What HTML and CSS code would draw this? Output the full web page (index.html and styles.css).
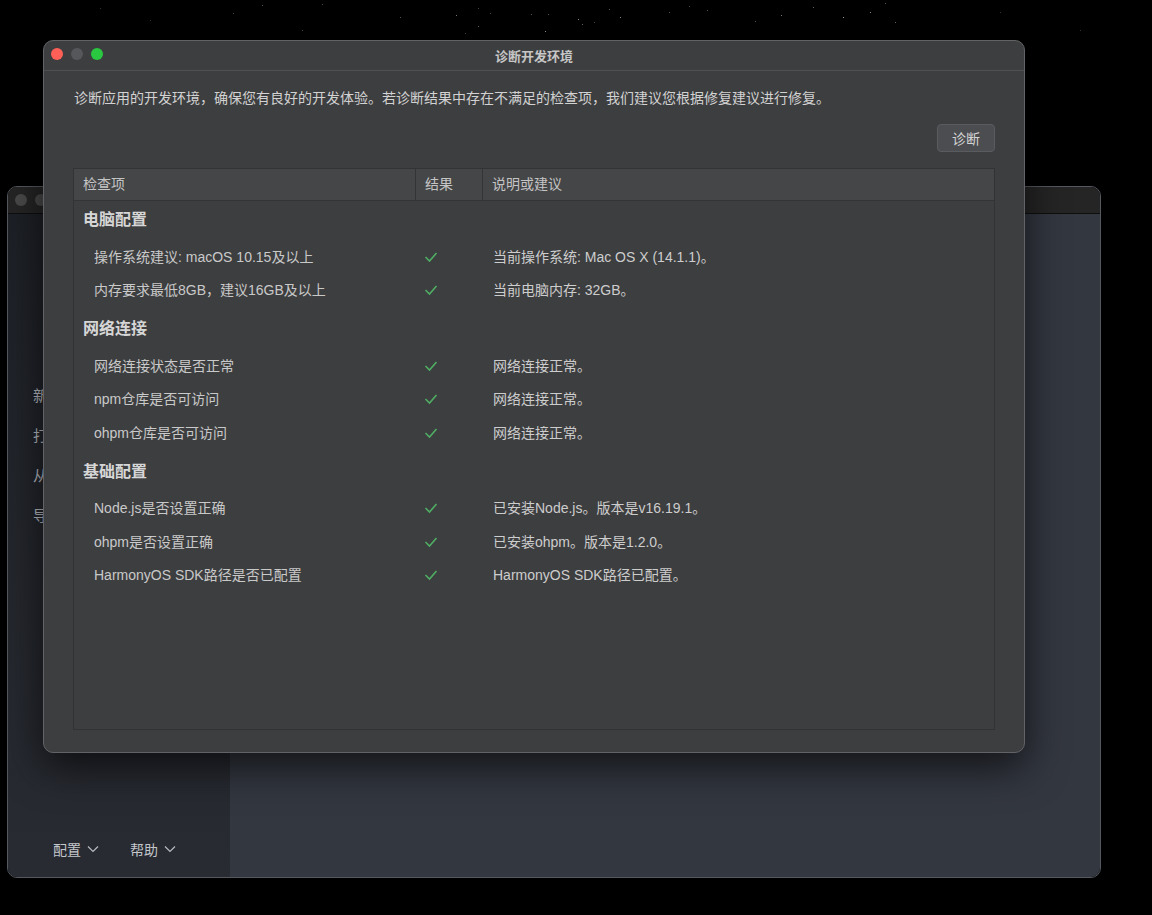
FILE: index.html
```html
<!DOCTYPE html>
<html lang="zh-CN">
<head>
    <meta charset="UTF-8">
    <title>诊断开发环境</title>
    <link rel="stylesheet" href="styles.css">
</head>
<body>
    <div class="desktop">
        <div class="stars"></div>

        <!-- Back window: welcome screen -->
        <div class="welcome-window">
            <div class="welcome-titlebar">
                <span class="dot"></span>
                <span class="dot"></span>
                <span class="dot"></span>
            </div>
            <div class="welcome-body">
                <div class="welcome-side">
                    <div class="side-menu">
                        <div class="side-item">新建</div>
                        <div class="side-item">打开</div>
                        <div class="side-item">从</div>
                        <div class="side-item">导入</div>
                    </div>
                    <div class="side-footer">
                        <span class="footer-link">配置
                            <svg width="12" height="8" viewBox="0 0 12 8"><polyline points="1,1.5 6,6.5 11,1.5" fill="none" stroke="#b8bbc0" stroke-width="1.2"/></svg>
                        </span>
                        <span class="footer-link">帮助
                            <svg width="12" height="8" viewBox="0 0 12 8"><polyline points="1,1.5 6,6.5 11,1.5" fill="none" stroke="#b8bbc0" stroke-width="1.2"/></svg>
                        </span>
                    </div>
                </div>
                <div class="welcome-main"></div>
            </div>
        </div>

        <!-- Front window: diagnose dialog -->
        <div class="dialog">
            <div class="dialog-titlebar">
                <div class="lights">
                    <span class="light red"></span>
                    <span class="light grey"></span>
                    <span class="light green"></span>
                </div>
                <div class="dialog-title">诊断开发环境</div>
            </div>
            <div class="dialog-content">
                <div class="intro">诊断应用的开发环境，确保您有良好的开发体验。若诊断结果中存在不满足的检查项，我们建议您根据修复建议进行修复。</div>
                <div class="actions">
                    <button class="btn">诊断</button>
                </div>
                <div class="check-table">
                    <div class="table-head">
                        <div class="th">检查项</div>
                        <div class="th">结果</div>
                        <div class="th last">说明或建议</div>
                    </div>
                    <div class="table-body">
                        <div class="group">电脑配置</div>
                        <div class="row">
                            <div class="cell-name">操作系统建议: macOS 10.15及以上</div>
                            <div class="cell-ok"><svg width="14" height="12" viewBox="0 0 14 12"><polyline points="1.5,6 5.5,10 12.5,2" fill="none" stroke="#4fae63" stroke-width="1.6"/></svg></div>
                            <div class="cell-desc">当前操作系统: Mac OS X (14.1.1)。</div>
                        </div>
                        <div class="row">
                            <div class="cell-name">内存要求最低8GB，建议16GB及以上</div>
                            <div class="cell-ok"><svg width="14" height="12" viewBox="0 0 14 12"><polyline points="1.5,6 5.5,10 12.5,2" fill="none" stroke="#4fae63" stroke-width="1.6"/></svg></div>
                            <div class="cell-desc">当前电脑内存: 32GB。</div>
                        </div>

                        <div class="group next">网络连接</div>
                        <div class="row">
                            <div class="cell-name">网络连接状态是否正常</div>
                            <div class="cell-ok"><svg width="14" height="12" viewBox="0 0 14 12"><polyline points="1.5,6 5.5,10 12.5,2" fill="none" stroke="#4fae63" stroke-width="1.6"/></svg></div>
                            <div class="cell-desc">网络连接正常。</div>
                        </div>
                        <div class="row">
                            <div class="cell-name">npm仓库是否可访问</div>
                            <div class="cell-ok"><svg width="14" height="12" viewBox="0 0 14 12"><polyline points="1.5,6 5.5,10 12.5,2" fill="none" stroke="#4fae63" stroke-width="1.6"/></svg></div>
                            <div class="cell-desc">网络连接正常。</div>
                        </div>
                        <div class="row">
                            <div class="cell-name">ohpm仓库是否可访问</div>
                            <div class="cell-ok"><svg width="14" height="12" viewBox="0 0 14 12"><polyline points="1.5,6 5.5,10 12.5,2" fill="none" stroke="#4fae63" stroke-width="1.6"/></svg></div>
                            <div class="cell-desc">网络连接正常。</div>
                        </div>

                        <div class="group next">基础配置</div>
                        <div class="row">
                            <div class="cell-name">Node.js是否设置正确</div>
                            <div class="cell-ok"><svg width="14" height="12" viewBox="0 0 14 12"><polyline points="1.5,6 5.5,10 12.5,2" fill="none" stroke="#4fae63" stroke-width="1.6"/></svg></div>
                            <div class="cell-desc">已安装Node.js。版本是v16.19.1。</div>
                        </div>
                        <div class="row">
                            <div class="cell-name">ohpm是否设置正确</div>
                            <div class="cell-ok"><svg width="14" height="12" viewBox="0 0 14 12"><polyline points="1.5,6 5.5,10 12.5,2" fill="none" stroke="#4fae63" stroke-width="1.6"/></svg></div>
                            <div class="cell-desc">已安装ohpm。版本是1.2.0。</div>
                        </div>
                        <div class="row">
                            <div class="cell-name">HarmonyOS SDK路径是否已配置</div>
                            <div class="cell-ok"><svg width="14" height="12" viewBox="0 0 14 12"><polyline points="1.5,6 5.5,10 12.5,2" fill="none" stroke="#4fae63" stroke-width="1.6"/></svg></div>
                            <div class="cell-desc">HarmonyOS SDK路径已配置。</div>
                        </div>
                    </div>
                </div>
            </div>
        </div>
    </div>
</body>
</html>
```

FILE: styles.css
```css
body {
    margin: 0;
    padding: 0;
    background-color: #000;
    font-family: 'Liberation Sans', 'Noto Sans CJK SC', sans-serif;
    font-size: 14px;
    color: #cccccc;
}

.desktop {
    position: relative;
    width: 1152px;
    height: 915px;
    overflow: hidden;
    background-color: #000;
}

.stars {
    position: absolute;
    top: 0;
    left: 0;
    width: 1px;
    height: 1px;
    background: transparent;
    box-shadow:
        262px 5px #555, 322px 4px #444, 400px 17px #555, 456px 15px #777,
        478px 8px #444, 490px 13px #444, 548px 14px #555, 594px 22px #444,
        478px 26px #666, 465px 33px #444, 578px 19px #888, 609px 9px #555,
        531px 14px #555, 545px 31px #999, 582px 24px #666, 620px 17px #888,
        669px 12px #555, 689px 6px #444, 781px 15px #777, 813px 7px #666,
        870px 12px #888, 885px 3px #555, 895px 22px #666, 302px 30px #444,
        233px 13px #444, 707px 10px #555, 755px 21px #555, 843px 17px #999,
        1000px 12px #333, 1080px 30px #333, 150px 20px #333, 100px 8px #333;
}

/* back window */
.welcome-window {
    position: absolute;
    left: 7px;
    top: 186px;
    width: 1092px;
    height: 690px;
    border: 1px solid #55595f;
    border-radius: 10px;
    overflow: hidden;
    display: flex;
    flex-direction: column;
}

.welcome-titlebar {
    height: 26px;
    background-color: #252525;
    border-bottom: 1px solid #0e0e0e;
    display: flex;
    align-items: center;
    gap: 8px;
    padding-left: 7px;
}

.welcome-titlebar .dot {
    width: 12px;
    height: 12px;
    border-radius: 50%;
    background-color: #4a4a4b;
}

.welcome-body {
    flex: 1;
    display: flex;
}

.welcome-side {
    width: 222px;
    background: linear-gradient(180deg, #1d2026 0%, #23262c 50%, #282b32 100%);
    display: flex;
    flex-direction: column;
    justify-content: space-between;
}

.side-menu {
    padding-top: 162px;
    padding-left: 25px;
}

.side-item {
    font-size: 15px;
    color: #b9bcc2;
    height: 40px;
    line-height: 40px;
}

.side-footer {
    display: flex;
    gap: 31px;
    padding-left: 45px;
    padding-bottom: 18px;
}

.footer-link {
    font-size: 14px;
    color: #c3c6cb;
    display: flex;
    align-items: center;
    gap: 6px;
}

.welcome-main {
    flex: 1;
    background-color: #333740;
}

/* dialog */
.dialog {
    position: absolute;
    left: 43px;
    top: 40px;
    width: 980px;
    height: 711px;
    background-color: #3d3e40;
    border: 1px solid #626366;
    border-radius: 10px;
    box-shadow: 0 14px 40px rgba(0, 0, 0, 0.65);
    display: flex;
    flex-direction: column;
}

.dialog-titlebar {
    position: relative;
    height: 29px;
    border-bottom: 1px solid #4f5053;
    display: flex;
    align-items: center;
    justify-content: center;
}

.lights {
    position: absolute;
    left: 7px;
    top: 7px;
    display: flex;
    gap: 8px;
}

.light {
    width: 12px;
    height: 12px;
    border-radius: 50%;
}

.light.red {
    background-color: #fe5f57;
}

.light.grey {
    background-color: #56575a;
}

.light.green {
    background-color: #29c840;
}

.dialog-title {
    font-size: 13px;
    font-weight: bold;
    color: #c6c6c6;
}

.dialog-content {
    flex: 1;
    display: flex;
    flex-direction: column;
    padding: 17px 29px 22px 29px;
}

.intro {
    line-height: 20px;
    color: #d2d2d2;
    padding-left: 1px;
}

.actions {
    display: flex;
    justify-content: flex-end;
    margin-top: 16px;
}

.btn {
    width: 58px;
    height: 28px;
    background-color: #4b4d50;
    border: 1px solid #595b5e;
    border-radius: 4px;
    color: #d4d4d4;
    font-family: inherit;
    font-size: 14px;
    padding: 0;
}

.check-table {
    flex: 1;
    margin-top: 16px;
    border: 1px solid #323335;
    display: flex;
    flex-direction: column;
}

.table-head {
    display: grid;
    grid-template-columns: 342px 67px 1fr;
    height: 31px;
    background-color: #454648;
    border-bottom: 1px solid #333436;
}

.th {
    padding-left: 9px;
    line-height: 31px;
    color: #c4c4c4;
    border-right: 1px solid #333436;
}

.th.last {
    border-right: none;
}

.table-body {
    flex: 1;
}

.group {
    height: 38px;
    line-height: 38px;
    padding-left: 9px;
    font-size: 16px;
    font-weight: bold;
    color: #d6d6d6;
}

.group.next {
    margin-top: 4px;
}

.row {
    display: grid;
    grid-template-columns: 342px 67px 1fr;
    height: 33.5px;
    align-items: center;
}

.cell-name {
    padding-left: 20px;
    color: #c9c9c9;
}

.cell-ok {
    padding-left: 8px;
    display: flex;
    align-items: center;
    padding-top: 2px;
}

.cell-desc {
    padding-left: 10px;
    color: #cdcdcd;
}
```
